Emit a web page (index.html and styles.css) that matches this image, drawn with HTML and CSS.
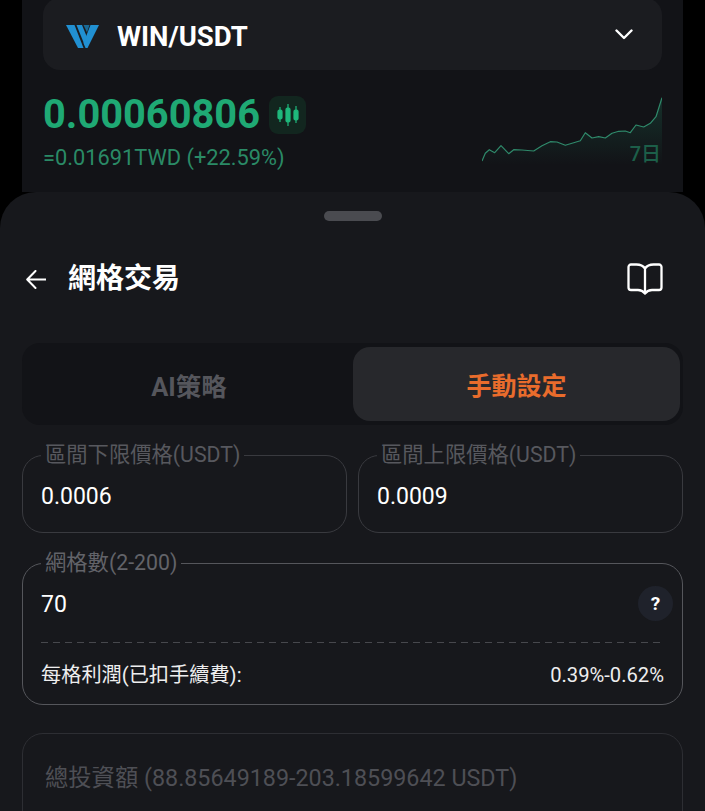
FILE: index.html
```html
<!DOCTYPE html>
<html lang="zh-Hant">
<head>
<meta charset="utf-8">
<title>網格交易</title>
<link rel="stylesheet" href="styles.css">
</head>
<body>
<div class="screen">
  <section class="market">
    <div class="selector">
      <svg class="logo" viewBox="0 0 33 23" aria-hidden="true">
        <polygon points="0,0 8.500,0 17.500,23 12,23" fill="#2190d2"/>
        <polygon points="10.500,0 16,0 21.500,13.500 18.800,20.500" fill="#2190d2"/>
        <polygon points="33,0 24.500,0 17.500,18 19.500,23 21.500,23" fill="#2190d2"/>
        <polygon points="17.500,0 23.500,0 21,7.500" fill="#1a6a96"/>
      </svg>
      <span class="pair">WIN/USDT</span>
      <svg class="chevron" viewBox="0 0 18 11" aria-hidden="true">
        <path d="M1.500 1.500 9 9l7.500-7.500" fill="none" stroke="#fff" stroke-width="2.400" stroke-linecap="round" stroke-linejoin="round"/>
      </svg>
    </div>
    <div class="quote">
      <div class="quote-text">
        <div class="price-row">
          <span class="price">0.00060806</span>
          <span class="candle-btn">
            <svg viewBox="0 0 22 24" width="22" height="24" aria-hidden="true">
              <g stroke="#1fb87c" stroke-width="1.200" fill="#1fb87c">
                <line x1="3" y1="4" x2="3" y2="19"/><rect x="1" y="7" width="4" height="9" rx="1.500"/>
                <line x1="11" y1="1" x2="11" y2="23"/><rect x="9" y="5" width="4" height="14" rx="1.500"/>
                <line x1="19" y1="3" x2="19" y2="20"/><rect x="17" y="7" width="4" height="10" rx="1.500"/>
              </g>
            </svg>
          </span>
        </div>
        <div class="fiat">=0.01691TWD (+22.59%)</div>
      </div>
      <div class="spark">
        <svg viewBox="0 0 180 70" width="180" height="70" aria-hidden="true">
          <defs>
            <linearGradient id="sparkfill" x1="0" y1="0" x2="0" y2="1">
              <stop offset="0" stop-color="#1f8f68" stop-opacity=".24"/>
              <stop offset="1" stop-color="#1f8f68" stop-opacity="0"/>
            </linearGradient>
          </defs>
          <polygon fill="url(#sparkfill)" points="0,66 3.300,58.300 7.300,54.700 12.700,57.700 19,50.700 26.700,58.700 31.700,54.700 40,55 51.700,56 60,50.700 68.300,46.700 75,47 83.300,50.300 91.700,47.700 98.300,45.700 103.300,37.700 110,43 116.700,41.700 123.300,43 130,38.300 136.700,36.300 143.300,36 148.300,37.700 154,30 161.700,32 168.300,28.300 174,21.700 180,2.700 180,70 0,70"/>
          <polyline fill="none" stroke="#2f8a6b" stroke-width="1.200" stroke-linejoin="round" points="0,66 3.300,58.300 7.300,54.700 12.700,57.700 19,50.700 26.700,58.700 31.700,54.700 40,55 51.700,56 60,50.700 68.300,46.700 75,47 83.300,50.300 91.700,47.700 98.300,45.700 103.300,37.700 110,43 116.700,41.700 123.300,43 130,38.300 136.700,36.300 143.300,36 148.300,37.700 154,30 161.700,32 168.300,28.300 174,21.700 180,2.700"/>
        </svg>
        <span class="spark-label">7日</span>
      </div>
    </div>
  </section>

  <section class="sheet">
    <div class="handle"></div>
    <header class="sheet-head">
      <svg class="back" viewBox="0 0 20 19" aria-hidden="true">
        <path d="M19.500 9.500H1.500M9.500 1 1.200 9.500 9.500 18" fill="none" stroke="#fff" stroke-width="2" stroke-linecap="round" stroke-linejoin="round"/>
      </svg>
      <h1 class="title">網格交易</h1>
      <svg class="book" viewBox="0 0 36 32" aria-hidden="true">
        <path d="M18 5.500C16 2.500 13 1.500 9.500 1.500H4A2.500 2.500 0 0 0 1.500 4V24.500A2.500 2.500 0 0 0 4 27H11C14 27 16 28 18 30.500C20 28 22 27 25 27H32A2.500 2.500 0 0 0 34.500 24.500V4A2.500 2.500 0 0 0 32 1.500H26.500C23 1.500 20 2.500 18 5.500ZM18 5.500V30.500" fill="none" stroke="#fff" stroke-width="2.300" stroke-linejoin="round"/>
      </svg>
    </header>

    <div class="tabs">
      <div class="tab tab-idle">AI策略</div>
      <div class="tab tab-active">手動設定</div>
    </div>

    <div class="range-row">
      <fieldset class="field field-short">
        <legend>區間下限價格(USDT)</legend>
        <div class="value">0.0006</div>
      </fieldset>
      <fieldset class="field field-short">
        <legend>區間上限價格(USDT)</legend>
        <div class="value">0.0009</div>
      </fieldset>
    </div>

    <fieldset class="field field-grid">
      <legend>網格數(2-200)</legend>
      <div class="grid-input">
        <div class="value">70</div>
        <span class="help">?</span>
      </div>
      <div class="dash"></div>
      <div class="profit">
        <span>每格利潤(已扣手續費):</span>
        <span>0.39%-0.62%</span>
      </div>
    </fieldset>

    <div class="field-total">
      <span>總投資額 (88.85649189-203.18599642 USDT)</span>
    </div>
  </section>
</div>
</body>
</html>
```

FILE: styles.css
```css
* { box-sizing: border-box; }

html, body {
  margin: 0;
  height: 811px;
  overflow: hidden;
  background: #000;
}

body {
  font-family: Roboto, "Noto Sans CJK TC", sans-serif;
  color: #fff;
}

.screen {
  width: 705px;
  height: 811px;
  overflow: hidden;
}

.market {
  display: flow-root;
  height: 192px;
  margin: 0 22px;
  padding: 0 21px;
  background: #121317;
}

.selector {
  display: flex;
  align-items: center;
  height: 72px;
  margin-top: -2px;
  padding: 4px 29px 0 23px;
  background: #1b1c20;
  border-radius: 17px;
}

.logo { width: 33px; height: 23px; flex: none; }

.pair {
  margin-left: 18px;
  font-size: 27.500px;
  font-weight: 700;
  flex: 1;
}

.chevron { width: 18px; height: 11px; flex: none; margin-top: -3px; }

.quote {
  display: flex;
  justify-content: space-between;
  margin-top: 22px;
}

.price-row {
  display: flex;
  align-items: center;
  gap: 9px;
  height: 46px;
}

.price {
  font-size: 39.800px;
  font-weight: 700;
  color: #1fa974;
  line-height: 46px;
}

.candle-btn {
  display: flex;
  align-items: center;
  justify-content: center;
  width: 37px;
  height: 38px;
  border-radius: 9px;
  background: #12261f;
}

.fiat {
  margin-top: 7px;
  font-size: 21.800px;
  line-height: 26px;
  color: #2a8a66;
}

.spark {
  position: relative;
  width: 180px;
  height: 70px;
  margin-top: 3px;
}

.spark svg { display: block; }

.spark-label {
  position: absolute;
  right: 1px;
  bottom: -1px;
  font-size: 20px;
  line-height: 24px;
  font-weight: 500;
  color: #1c5f49;
}

.sheet {
  height: 619px;
  padding: 0 22px;
  background: #17181c;
  border-radius: 36px 36px 0 0;
}

.handle {
  width: 58px;
  height: 10px;
  margin: 0 auto;
  position: relative;
  top: 19px;
  border-radius: 5px;
  background: #4a4b50;
}

.sheet-head {
  display: flex;
  align-items: center;
  height: 66px;
  margin-top: 44px;
  padding: 0 20px 0 4px;
}

.back { width: 20px; height: 19px; flex: none; }

.title {
  flex: 1;
  margin: 0 0 0 22px;
  font-size: 28px;
  font-weight: 700;
  line-height: 40px;
}

.book { width: 36px; height: 32px; flex: none; }

.tabs {
  display: flex;
  height: 82px;
  margin-top: 31px;
  padding: 4px 3px 4px 0;
  background: #121317;
  border-radius: 18px;
}

.tab {
  flex: 1;
  display: flex;
  align-items: center;
  justify-content: center;
  font-size: 25px;
  font-weight: 700;
  color: #55565c;
}

.tab-idle { padding-left: 7px; font-size: 25.500px; }

.tab-active {
  flex: 0 0 327px;
  margin-left: 4px;
  background: #27282c;
  border-radius: 17px;
  color: #e96c2c;
}

.field {
  margin: 0;
  min-width: 0;
  padding: 0 18px;
  border: 1px solid #393a3f;
  border-radius: 21px;
}

.field legend {
  padding: 0 4px;
  font-size: 21.300px;
  line-height: 24px;
  color: #57585e;
}

.range-row {
  display: grid;
  grid-template-columns: 325px 325px;
  gap: 11px;
  margin-top: 18px;
}

.field-short { height: 90px; }

.value {
  font-size: 23px;
  line-height: 30px;
  margin-top: 15px;
}

.field-grid {
  height: 154px;
  margin-top: 18px;
  border-color: #55565b;
}

.field-grid legend { color: #626369; }

.grid-input {
  display: flex;
  align-items: center;
  justify-content: space-between;
  height: 56px;
  margin-right: -9px;
}

.grid-input .value { margin-top: 4px; }

.help {
  display: flex;
  align-items: center;
  justify-content: center;
  width: 35px;
  height: 35px;
  border-radius: 50%;
  background: #1f222b;
  font-size: 19px;
  font-weight: 700;
}

.dash {
  height: 1px;
  margin-top: 11px;
  background: repeating-linear-gradient(90deg, #47484d 0 7px, transparent 7px 12px);
}

.profit {
  display: flex;
  justify-content: space-between;
  padding-top: 18px;
  font-size: 20.200px;
  line-height: 28px;
  color: #eeeeef;
}

.field-total {
  height: 100px;
  margin-top: 28px;
  padding: 28px 22px;
  border: 1px solid #2d2e33;
  border-radius: 21px;
  font-size: 23.300px;
  line-height: 32px;
  color: #4e4f55;
}
```
